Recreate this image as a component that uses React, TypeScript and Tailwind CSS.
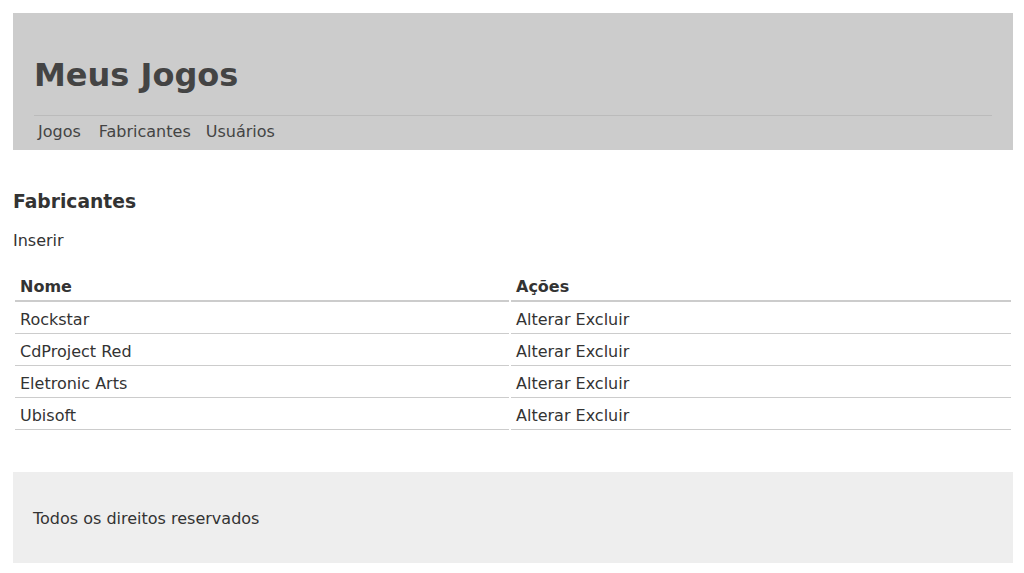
import React from 'react';

const fabricantes = ['Rockstar', 'CdProject Red', 'Eletronic Arts', 'Ubisoft'];

export default function App() {
  return (
    <div
      className="min-h-[573px] bg-white pt-[13px] pl-[13px] text-[16px] leading-[19px] text-[#333]"
      style={{ fontFamily: '"DejaVu Sans", Verdana, sans-serif' }}
    >
      <div className="w-[1000px]">
        {/* cabeçalho */}
        <header className="bg-[#cccccc] px-[21px] pt-[46px] pb-[8px]">
          <h1 className="text-[32px] leading-[32px] font-bold text-[#444]">Meus Jogos</h1>
          <hr className="mt-[24px] border-0 border-t border-[#bbbbbb]" />
          <nav className="mt-[6px] flex pl-[4px] leading-[20px] text-[#444]">
            <a href="#">Jogos</a>
            <a href="#" className="ml-[18px]">Fabricantes</a>
            <a href="#" className="ml-[15px]">Usuários</a>
          </nav>
        </header>

        <main>
          <h3 className="mt-[41px] text-[18.72px] leading-[22px] font-bold">Fabricantes</h3>
          <a href="#" className="mt-[18px] block">Inserir</a>

          <table className="mt-[19px] w-[1000px] border-separate border-spacing-[2px] text-left">
            <thead>
              <tr>
                <th className="w-[494px] border-b-2 border-[#cccccc] px-[5px] pt-[6px] pb-[4px] font-bold">Nome</th>
                <th className="border-b-2 border-[#cccccc] px-[5px] pt-[6px] pb-[4px] font-bold">Ações</th>
              </tr>
            </thead>
            <tbody>
              {fabricantes.map((nome) => (
                <tr key={nome}>
                  <td className="border-b border-[#cccccc] px-[5px] pt-[6px] pb-[4px]">{nome}</td>
                  <td className="border-b border-[#cccccc] px-[5px] pt-[6px] pb-[4px]">
                    <a href="#">Alterar</a> <a href="#">Excluir</a>
                  </td>
                </tr>
              ))}
            </tbody>
          </table>
        </main>

        <footer className="mt-[40px] bg-[#eeeeee] px-[20px] pt-[37px] pb-[35px]">
          <p>Todos os direitos reservados</p>
        </footer>
      </div>
    </div>
  );
}
